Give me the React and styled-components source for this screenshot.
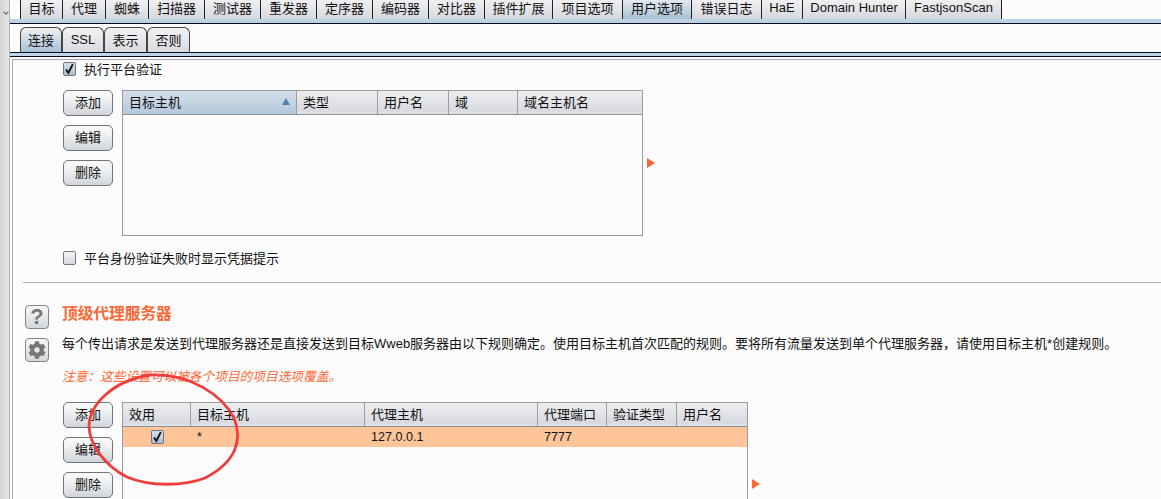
import React from "react";
import styled, { createGlobalStyle } from "styled-components";
import { FaCog } from "react-icons/fa";

const topTabs = [
  ["目标", 42], ["代理", 43], ["蜘蛛", 43], ["扫描器", 56], ["测试器", 56], ["重发器", 56],
  ["定序器", 56], ["编码器", 56], ["对比器", 56], ["插件扩展", 68], ["项目选项", 70], ["用户选项", 69, true],
  ["错误日志", 70], ["HaE", 41], ["Domain Hunter", 103], ["FastjsonScan", 97],
];
const subTabs = [["连接", 42, true], ["SSL", 42], ["表示", 43], ["否则", 43]];

const GlobalStyle = createGlobalStyle`
  html, body {
    margin: 0;
    background: #fcfcfc;
  }
  body {
    font-family: "Liberation Sans", "Noto Sans CJK SC", sans-serif;
    font-size: 13px;
    color: #111;
  }
`;

const Page = styled.div`
  position: relative;
  display: flex;
  width: 1161px;
  height: 499px;
  overflow: hidden;
`;

const Rail = styled.div`
  position: relative;
  flex: none;
  width: 9px;
  background: linear-gradient(90deg, #d4d4d4, #e6e6e6);
  border-right: 1px solid #b4b4b4;
  &::after {
    content: "";
    position: absolute;
    left: 4px;
    top: 10px;
    width: 3px;
    height: 3px;
    border-right: 1px solid #666;
    border-bottom: 1px solid #666;
    transform: rotate(45deg);
  }
`;

const Main = styled.div`
  flex: 1;
  min-width: 0;
`;

const TabStrip = styled.div`
  display: flex;
  height: ${(p) => p.$height}px;
  padding-left: 10px;
  align-items: flex-end;
`;

const TopTab = styled.div`
  flex: none;
  box-sizing: border-box;
  width: ${(p) => p.$w}px;
  height: 19px;
  padding-bottom: 4px;
  display: flex;
  align-items: center;
  justify-content: center;
  border-left: 1px solid #222;
  background: ${(p) =>
    p.$active
      ? "linear-gradient(#e4e9ee, #a8c1d6)"
      : "linear-gradient(#f0f0f2, #d6d8de)"};
  &:last-child {
    border-right: 1px solid #222;
  }
`;

const SubTab = styled.div`
  flex: none;
  box-sizing: border-box;
  width: ${(p) => p.$w}px;
  height: 25px;
  padding-bottom: 2px;
  display: flex;
  align-items: center;
  justify-content: center;
  border: 1px solid #444;
  border-bottom: 0;
  border-radius: 6px 6px 0 0;
  background: ${(p) =>
    p.$active
      ? "linear-gradient(#eef1f4, #a8c1d6)"
      : "linear-gradient(#f2f2f4, #d8dae0)"};
`;

const Band = styled.div`
  height: ${(p) => p.$height}px;
  box-sizing: border-box;
  background: #bcd3e6;
  border-bottom: 1px solid #0a0a1e;
  border-top: ${(p) => (p.$top ? "1px solid #0a0a1e" : "0")};
`;

const Panel = styled.div`
  margin: 2px 0 0 2px;
  border-top: 1px solid #a8a8b0;
  border-left: 1px solid #a8a8b0;
  padding: 2px 0 0 50px;
`;

const CheckRow = styled.label`
  display: flex;
  align-items: center;
  gap: 8px;
  height: 14px;
  margin-top: ${(p) => p.$top}px;
`;

const CheckText = styled.span`
  margin-bottom: 2px;
`;

const Box = styled.span`
  flex: none;
  box-sizing: border-box;
  display: flex;
  align-items: center;
  justify-content: center;
  width: 13px;
  height: 14px;
  border: 1px solid #6f7680;
  border-radius: 2px;
  background: ${(p) =>
    p.$checked
      ? "linear-gradient(#d6e0ea, #a9bfd2)"
      : "linear-gradient(#f4f4f6, #d4d8de)"};
`;

const TableRow = styled.div`
  display: flex;
  align-items: flex-start;
  margin-top: ${(p) => p.$top}px;
  margin-left: ${(p) => p.$left || 0}px;
`;

const ButtonColumn = styled.div`
  flex: none;
  width: 50px;
  display: flex;
  flex-direction: column;
  gap: 9px;
  margin-right: 9px;
`;

const Button = styled.button`
  box-sizing: border-box;
  height: 26px;
  padding: 0 0 3px;
  font: inherit;
  color: inherit;
  border: 1px solid #70767e;
  border-radius: 5px;
  background: linear-gradient(#fafafa 0%, #eceef0 45%, #d0d4da 100%);
`;

const Table = styled.div`
  flex: none;
  box-sizing: border-box;
  width: ${(p) => p.$w}px;
  height: ${(p) => p.$h}px;
  border: 1px solid #9a9aa4;
`;

const HeaderRow = styled.div`
  display: grid;
  grid-template-columns: ${(p) => p.$columns};
  height: 23px;
  border-bottom: 1px solid #8b8f98;
`;

const HeaderCell = styled.div`
  display: flex;
  align-items: center;
  justify-content: space-between;
  box-sizing: border-box;
  padding: 0 6px 2px;
  border-right: 1px solid #9a9ca4;
  background: ${(p) =>
    p.$sorted
      ? "linear-gradient(#d4e0ea, #b2c8da)"
      : "linear-gradient(#eeeef0, #d8dae0 85%, #e2e3e8)"};
  &:last-child {
    border-right: 0;
  }
`;

const SortMark = styled.span`
  width: 0;
  height: 0;
  border-left: 4px solid transparent;
  border-right: 4px solid transparent;
  border-bottom: 7px solid #4f7fae;
`;

const DataRow = styled.div`
  display: grid;
  grid-template-columns: ${(p) => p.$columns};
  height: 20px;
  background: #ffc599;
`;

const DataCell = styled.div`
  display: flex;
  align-items: center;
  justify-content: ${(p) => (p.$center ? "center" : "flex-start")};
  padding-left: ${(p) => (p.$center ? 0 : 6)}px;
  font-size: 12.6px;
`;

const Flag = styled.span`
  flex: none;
  width: 0;
  height: 0;
  margin: ${(p) => p.$top}px 0 0 ${(p) => p.$left}px;
  border-top: 5px solid transparent;
  border-bottom: 5px solid transparent;
  border-left: 8px solid #ff6633;
`;

const Divider = styled.div`
  height: 1px;
  margin: 17px 0 0 -40px;
  background: #b0b0b6;
`;

const Section = styled.div`
  display: flex;
  margin: 22px 0 0 -38px;
`;

const IconColumn = styled.div`
  flex: none;
  width: 37px;
  display: flex;
  flex-direction: column;
  gap: 9px;
`;

const IconButton = styled.div`
  box-sizing: border-box;
  width: 24px;
  height: 24px;
  display: flex;
  align-items: center;
  justify-content: center;
  border: 1px solid #80868e;
  border-radius: 4px;
  background: linear-gradient(#f8f8f8, #d4d8dc);
  color: #767676;
  font-weight: bold;
  font-size: 22px;
`;

const SectionBody = styled.div`
  flex: 1;
  min-width: 0;
`;

const Title = styled.div`
  margin-top: 1px;
  color: #ff6633;
  font-size: 15.7px;
  font-weight: bold;
  line-height: 16px;
`;

const Description = styled.div`
  margin-top: 14px;
  line-height: 16px;
  white-space: nowrap;
`;

const Note = styled.div`
  margin-top: 17px;
  color: #ff6633;
  font-style: italic;
  font-size: 12.7px;
  line-height: 16px;
`;

const Scribble = styled.svg`
  position: absolute;
  left: 0;
  top: 0;
  pointer-events: none;
`;

const Check = ({ checked }) => (
  <Box $checked={checked}>
    {checked && (
      <svg width="11" height="12" viewBox="0 0 11 12">
        <path d="M2 6.5 L4.4 10 L8.8 1.2" fill="none" stroke="#111" strokeWidth="1.9" />
      </svg>
    )}
  </Box>
);

const Buttons = () => (
  <ButtonColumn>
    <Button>添加</Button>
    <Button>编辑</Button>
    <Button>删除</Button>
  </ButtonColumn>
);

const hostColumns = "174px 81px 71px 69px 1fr";
const proxyColumns = "68px 174px 173px 69px 70px 1fr";

const App = () => (
  <Page>
    <GlobalStyle />
    <Rail />
    <Main>
      <TabStrip $height={19}>
        {topTabs.map(([label, w, active]) => (
          <TopTab key={label} $w={w} $active={active}>{label}</TopTab>
        ))}
      </TabStrip>
      <Band $height={5} />
      <TabStrip $height={28}>
        {subTabs.map(([label, w, active]) => (
          <SubTab key={label} $w={w} $active={active}>{label}</SubTab>
        ))}
      </TabStrip>
      <Band $height={5} $top />
      <Panel>
        <CheckRow $top={0}>
          <Check checked />
          <CheckText>执行平台验证</CheckText>
        </CheckRow>
        <TableRow $top={14}>
          <Buttons />
          <Table $w={521} $h={146}>
            <HeaderRow $columns={hostColumns}>
              <HeaderCell $sorted>目标主机<SortMark /></HeaderCell>
              <HeaderCell>类型</HeaderCell>
              <HeaderCell>用户名</HeaderCell>
              <HeaderCell>域</HeaderCell>
              <HeaderCell>域名主机名</HeaderCell>
            </HeaderRow>
          </Table>
          <Flag $left={4} $top={68} />
        </TableRow>
        <CheckRow $top={15}>
          <Check />
          <CheckText>平台身份验证失败时显示凭据提示</CheckText>
        </CheckRow>
        <Divider />
        <Section>
          <IconColumn>
            <IconButton>?</IconButton>
            <IconButton><FaCog size={18} /></IconButton>
          </IconColumn>
          <SectionBody>
            <Title>顶级代理服务器</Title>
            <Description>
              {"每个传出请求是发送到代理服务器还是直接发送到目标Wweb服务器由以下规则确定。使用目标主机首次匹配的规则。要将所有流量发送到单个代理服务器\uFF0C请使用目标主机*创建规则。"}
            </Description>
            <Note>{"注意\uFF1A这些设置可以被各个项目的项目选项覆盖。"}</Note>
            <TableRow $top={17} $left={1}>
              <Buttons />
              <Table $w={626} $h={130}>
                <HeaderRow $columns={proxyColumns}>
                  <HeaderCell>效用</HeaderCell>
                  <HeaderCell>目标主机</HeaderCell>
                  <HeaderCell>代理主机</HeaderCell>
                  <HeaderCell>代理端口</HeaderCell>
                  <HeaderCell>验证类型</HeaderCell>
                  <HeaderCell>用户名</HeaderCell>
                </HeaderRow>
                <DataRow $columns={proxyColumns}>
                  <DataCell $center><Check checked /></DataCell>
                  <DataCell>*</DataCell>
                  <DataCell>127.0.0.1</DataCell>
                  <DataCell>7777</DataCell>
                  <DataCell />
                  <DataCell />
                </DataRow>
              </Table>
              <Flag $left={4} $top={77} />
            </TableRow>
          </SectionBody>
        </Section>
      </Panel>
    </Main>
    <Scribble width="1161" height="499" viewBox="0 0 1161 499">
      <path
        d="M150 375 C190 373 222 395 234 418 C243 440 236 462 205 478 C185 486 150 487 127 477 C105 466 90 445 89 427 C89 405 112 381 150 375 Z"
        fill="none"
        stroke="#f23c3c"
        strokeWidth="2.8"
      />
    </Scribble>
  </Page>
);

export default App;
